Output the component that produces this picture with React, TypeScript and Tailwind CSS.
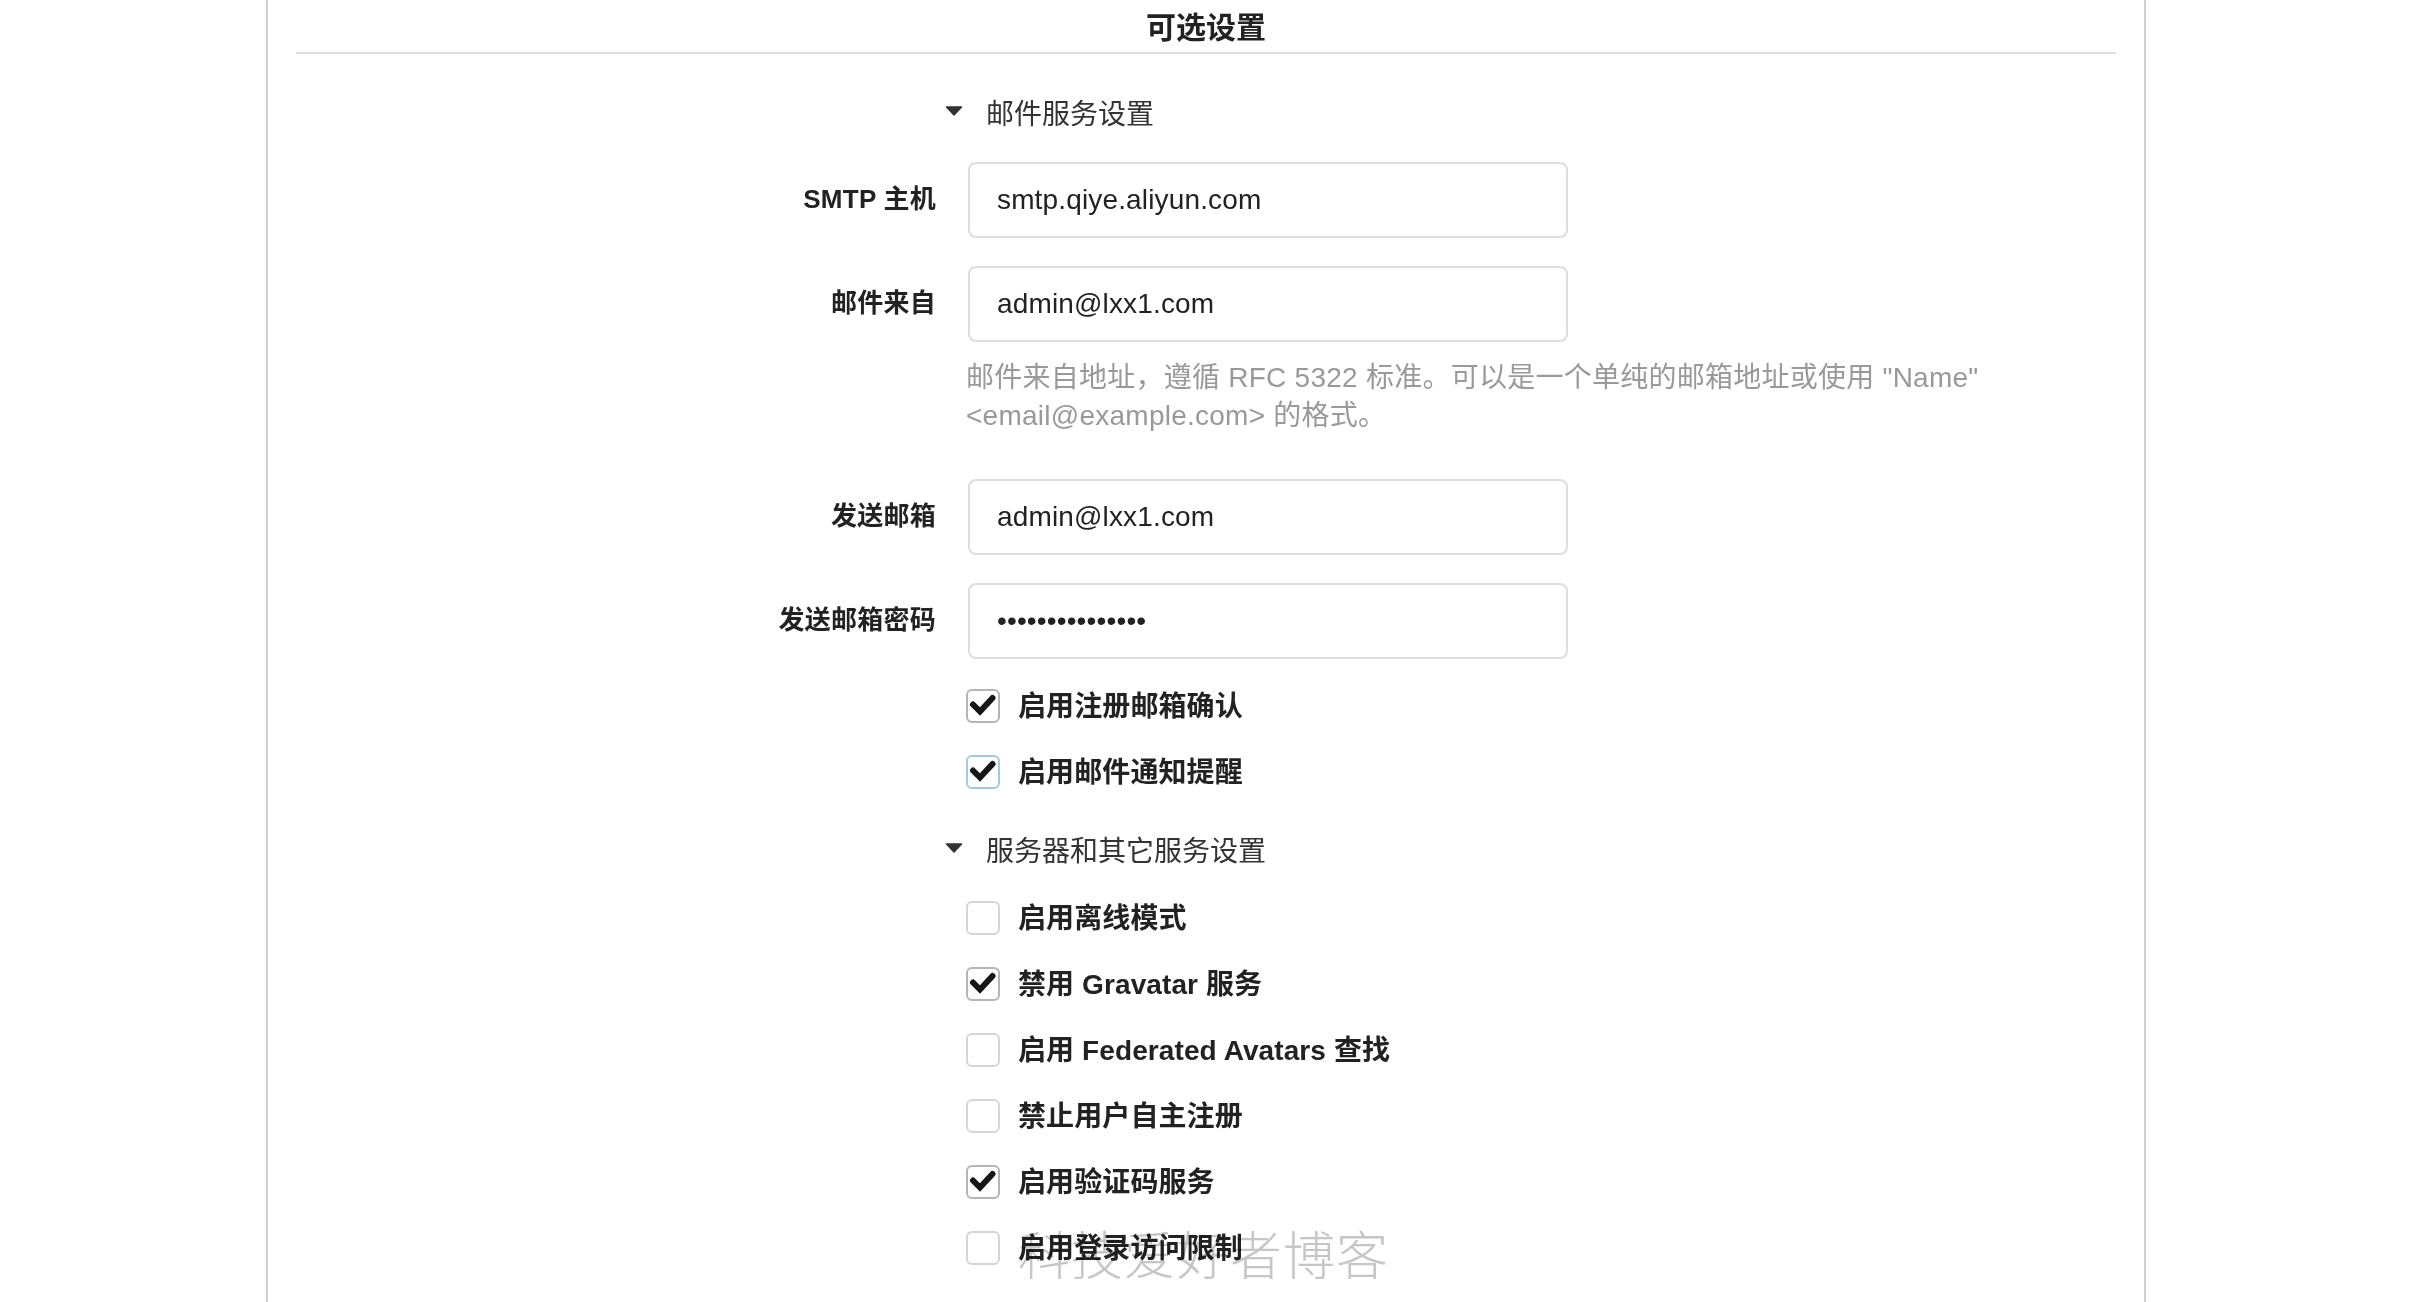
function Field({ label, value, type = "text", className = "" }: { label: string; value: string; type?: string; className?: string }) {
  return (
    <div className={`flex items-center ${className}`}>
      <label className="mb-[2px] w-[936px] shrink-0 text-right text-[26px] font-bold leading-[40px] tracking-[0.25px] text-[#222]">{label}</label>
      <input
        readOnly
        type={type}
        value={value}
        className="ml-[32px] h-[76px] w-[600px] rounded-[8px] border-2 border-[#dddddd] bg-white px-[27px] text-[28px] tracking-[0.15px] text-[#222] outline-none"
      />
    </div>
  );
}

function Check({ label, checked, focus, className = "" }: { label: string; checked?: boolean; focus?: boolean; className?: string }) {
  const border = focus ? "border-[#a3cadf]" : checked ? "border-[#b5b5b5]" : "border-[#d5d5d5]";
  return (
    <div className={`ml-[966px] flex h-[34px] items-center ${className}`}>
      <span className={`flex h-[34px] w-[34px] items-center justify-center rounded-[6px] border-2 bg-white ${border}`}>
        {checked && (
          <svg width="30" height="30" viewBox="0 0 30 30">
            <path d="M5 13.5 L12 20.5 L24.5 7" fill="none" stroke="#161616" strokeWidth="6" strokeLinecap="round" strokeLinejoin="miter" />
          </svg>
        )}
      </span>
      <span className="ml-[18px] mt-[2px] text-[28px] font-bold leading-[34px] tracking-[0.1px] text-[#222]">{label}</span>
    </div>
  );
}

function Section({ title, className = "" }: { title: string; className?: string }) {
  return (
    <div className={`flex h-[40px] items-center ${className}`}>
      <svg width="18" height="10" viewBox="0 0 18 10" className="mb-[8px] ml-[945px]">
        <path d="M1.5 1 H16.5 L9 9 Z" fill="#333" stroke="#333" strokeWidth="1.5" strokeLinejoin="round" />
      </svg>
      <span className="ml-[23px] text-[28px] leading-[40px] text-[#333]">{title}</span>
    </div>
  );
}

export default function App() {
  return (
    <div
      className="relative h-[1302px] w-[2412px] overflow-hidden bg-white"
      style={{ fontFamily: '"Liberation Sans", "Noto Sans CJK SC", sans-serif' }}
    >
      <div className="ml-[266px] h-full w-[1880px] border-x-2 border-[#d2d2d2]">
        <div className="mx-[28px] h-[54px] border-b-2 border-[#dddddd] pt-[8px] text-center text-[30px] font-bold leading-[40px] text-[#222]">
          可选设置
        </div>
      </div>
      <div className="absolute left-0 top-0 w-full">
        <Section title="邮件服务设置" className="mt-[95px]" />
        <Field label="SMTP 主机" value="smtp.qiye.aliyun.com" className="mt-[27px]" />
        <Field label="邮件来自" value="admin@lxx1.com" className="mt-[28px]" />
        <p className="ml-[966px] mt-[17px] w-[1040px] text-[28px] leading-[38px] tracking-[0.25px] text-[#999]">
          邮件来自地址，遵循 RFC 5322 标准。可以是一个单纯的邮箱地址或使用 "Name"
          <br />
          &lt;email@example.com&gt; 的格式。
        </p>
        <Field label="发送邮箱" value="admin@lxx1.com" className="mt-[44px]" />
        <Field label="发送邮箱密码" type="password" value="123456789012345" className="mt-[28px]" />
        <Check label="启用注册邮箱确认" checked className="mt-[30px]" />
        <Check label="启用邮件通知提醒" checked focus className="mt-[32px]" />
        <Section title="服务器和其它服务设置" className="mt-[43px]" />
        <Check label="启用离线模式" className="mt-[29px]" />
        <Check label="禁用 Gravatar 服务" checked className="mt-[32px]" />
        <Check label="启用 Federated Avatars 查找" className="mt-[32px]" />
        <Check label="禁止用户自主注册" className="mt-[32px]" />
        <Check label="启用验证码服务" checked className="mt-[32px]" />
        <Check label="启用登录访问限制" className="mt-[32px]" />
      </div>
      <div
        className="absolute left-[1018px] top-[1225px] text-[52px] font-light leading-[56px] tracking-[1px] text-[#c6c6c6] mix-blend-multiply"
        style={{ fontFamily: '"Noto Sans CJK SC", sans-serif' }}
      >
        科技爱好者博客
      </div>
    </div>
  );
}
